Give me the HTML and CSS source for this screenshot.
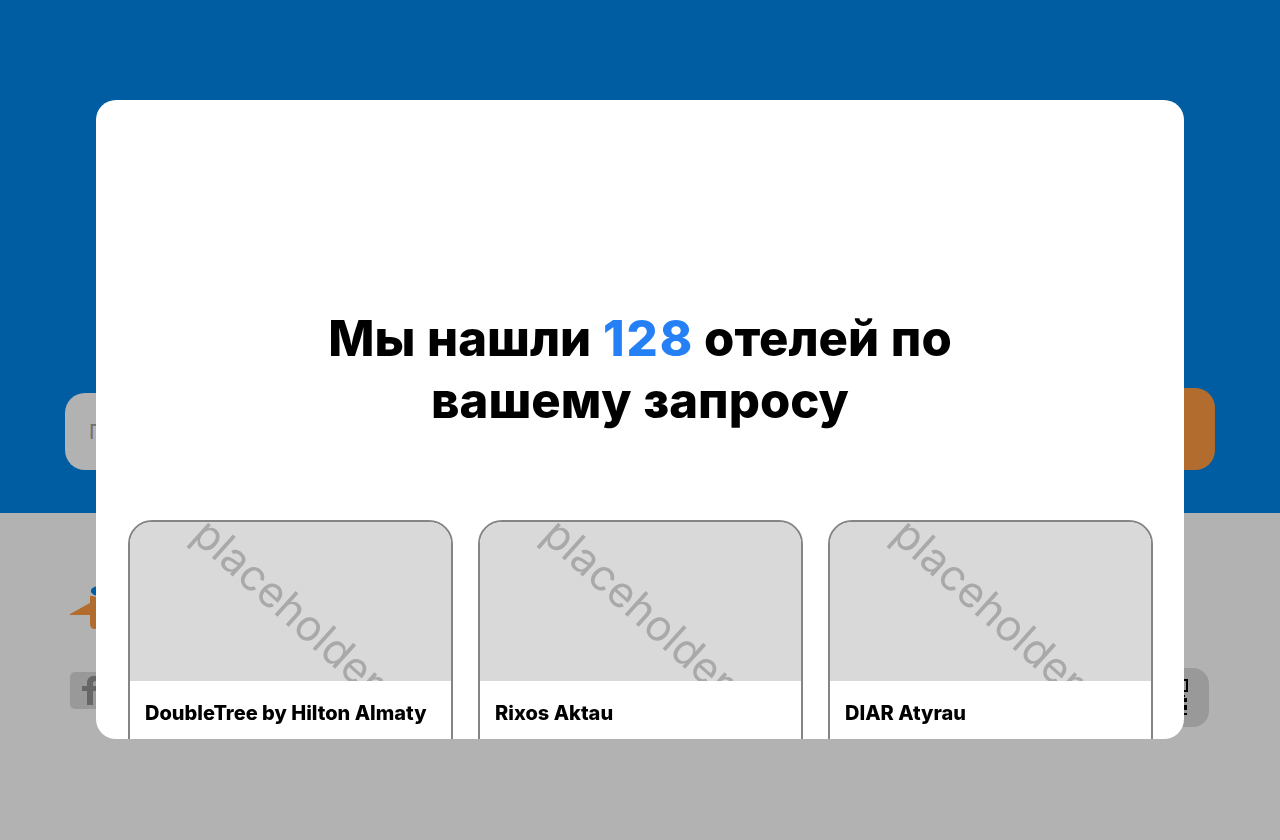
FILE: index.html
```html
<!DOCTYPE html>
<html lang="ru">

<head>
    <meta charset="UTF-8">
    <meta name="viewport" content="width=device-width, initial-scale=1.0">
    <title>Отели</title>
    <link rel="stylesheet" href="styles.css">
</head>

<body>
    <div class="hero">
        <div class="search-row">
            <input class="search-input" type="text" placeholder="Поиск отеля">
            <button class="search-btn">Найти</button>
        </div>
    </div>
    <div class="footer">
        <svg class="footer-logo" width="60" height="44" viewBox="0 0 60 44">
            <path d="M0 29 L20 18 V11 H60 V44 H25 Q20 44 20 39 V30 H0 Z" fill="#ff9d42" />
            <ellipse cx="33" cy="6" rx="13" ry="6.500" fill="#0086e9" stroke="#ffffff" stroke-width="1.500" />
        </svg>
        <div class="footer-row">
            <div class="social-tile">
                <svg width="20" height="29" viewBox="0 0 20 29">
                    <path d="M5 29V15H0v-5h5V7C5 2.500 8 0 12 0h6v5h-4c-2 0-3 .8-3 2.500V10h7l-1 5h-6v14z" fill="#929292" />
                </svg>
            </div>
            <div class="qr-tile">
                <svg width="14" height="48" viewBox="0 0 14 48">
                    <path d="M4 3h8v11H4z" fill="none" stroke="#000" stroke-width="2" />
                    <path d="M6 18h4v2H6zM9 21h3v4H9zM5 25h4v2H5zM9 28h3v5H9zM6 36h6v2H6z" fill="#000" />
                </svg>
            </div>
        </div>
    </div>

    <div class="overlay">
        <div class="modal">
            <h1 class="modal-title">Мы нашли <span class="count">128</span> отелей по<br>вашему запросу</h1>
            <div class="hotel-grid">
                <div class="hotel-card">
                    <svg class="hotel-img" viewBox="0 0 321 159" preserveAspectRatio="none">
                        <text class="ph-text" transform="translate(60 16) rotate(42)">placeholder</text>
                    </svg>
                    <div class="hotel-name">DoubleTree by Hilton Almaty</div>
                </div>
                <div class="hotel-card">
                    <svg class="hotel-img" viewBox="0 0 321 159" preserveAspectRatio="none">
                        <text class="ph-text" transform="translate(60 16) rotate(42)">placeholder</text>
                    </svg>
                    <div class="hotel-name">Rixos Aktau</div>
                </div>
                <div class="hotel-card">
                    <svg class="hotel-img" viewBox="0 0 321 159" preserveAspectRatio="none">
                        <text class="ph-text" transform="translate(60 16) rotate(42)">placeholder</text>
                    </svg>
                    <div class="hotel-name">DIAR Atyrau</div>
                </div>
            </div>
        </div>
    </div>
</body>

</html>
```

FILE: styles.css
```css
* {
    box-sizing: border-box;
}

body {
    margin: 0;
    height: 840px;
    overflow: hidden;
    font-family: Inter, "Liberation Sans", sans-serif;
    background-color: #ffffff;
}

.hero {
    height: 513px;
    padding: 388px 65px 0;
    background-color: #0086e9;
}

.search-row {
    display: flex;
    align-items: flex-end;
}

.search-input {
    flex: 1;
    height: 77px;
    padding: 0 24px;
    border: none;
    border-radius: 20px;
    background: #ffffff;
    font-family: inherit;
    font-size: 20px;
}

.search-input::placeholder {
    color: #a0a0a0;
}

.search-btn {
    width: 200px;
    height: 82px;
    margin-left: 20px;
    padding-right: 30px;
    border: none;
    border-radius: 20px;
    background-color: #ff9d42;
    color: #ffffff;
    font-family: inherit;
    font-size: 20px;
    text-align: right;
}

.footer {
    padding: 72px 70px 0;
}

.footer-logo {
    display: block;
}

.footer-row {
    display: flex;
    justify-content: space-between;
    align-items: flex-start;
    margin-top: 39px;
    margin-right: 1px;
}

.social-tile {
    display: flex;
    align-items: center;
    width: 60px;
    height: 37px;
    margin-top: 4px;
    padding-left: 12px;
    border-radius: 5px;
    background-color: #dcdcdc;
}

.qr-tile {
    width: 60px;
    height: 59px;
    padding: 9px 0 0 26px;
    border-radius: 16px;
    background-color: #dcdcdc;
}

.qr-tile svg {
    display: block;
}

.overlay {
    position: fixed;
    top: 0;
    left: 0;
    width: 100%;
    height: 100%;
    padding: 100px 96px;
    background: rgba(0, 0, 0, 0.3);
}

.modal {
    height: 639px;
    padding: 0 32px;
    overflow: hidden;
    border-radius: 20px;
    background: #ffffff;
}

.modal-title {
    margin: 208px 0 0;
    text-align: center;
    font-size: 49px;
    font-weight: 800;
    line-height: 62px;
    word-spacing: 1px;
    color: #000000;
}

.count {
    margin-right: -2px;
    letter-spacing: 2px;
    color: #2680f5;
}

.hotel-grid {
    display: grid;
    grid-template-columns: repeat(3, 325px);
    gap: 25px;
    margin-top: 88px;
}

.hotel-card {
    height: 300px;
    overflow: hidden;
    border: 2px solid #858585;
    border-radius: 24px;
}

.hotel-img {
    display: block;
    width: 100%;
    height: 159px;
    background-color: #d9d9d9;
}

.ph-text {
    font-family: Inter, sans-serif;
    font-size: 43px;
    font-weight: 400;
    fill: #a9a9a9;
}

.hotel-name {
    padding: 20px 15px;
    font-size: 20px;
    font-weight: 800;
    line-height: 24px;
    color: #000000;
}
```
